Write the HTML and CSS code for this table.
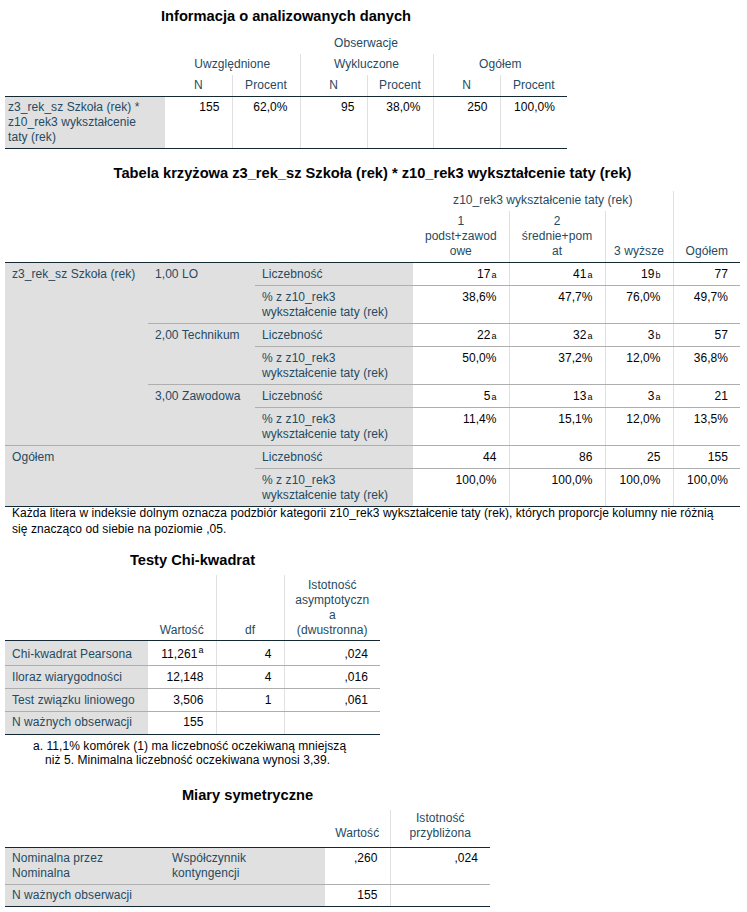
FILE: index.html
```html
<!DOCTYPE html>
<html lang="pl">
<head>
<meta charset="utf-8">
<title>SPSS output</title>
<link rel="stylesheet" href="styles.css">
</head>
<body>
<div class="page">

<table class="spss t1">
<caption>Informacja o analizowanych danych</caption>
<colgroup><col class="w160"><col class="w67"><col class="w68"><col class="w67"><col class="w66"><col class="w67"><col class="w67"></colgroup>
<thead>
<tr class="hr21"><th class="hb" rowspan="3"></th><th class="h" colspan="6">Obserwacje</th></tr>
<tr class="hr21"><th class="h" colspan="2">Uwzględnione</th><th class="h vl" colspan="2">Wykluczone</th><th class="h vl" colspan="2">Ogółem</th></tr>
<tr class="hr21"><th class="h hb">N</th><th class="h hb vl">Procent</th><th class="h hb vl">N</th><th class="h hb vl">Procent</th><th class="h hb vl">N</th><th class="h hb vl">Procent</th></tr>
</thead>
<tbody>
<tr><td class="lab lab1 tb">z3_rek_sz Szkoła (rek) *<br>z10_rek3 wykształcenie<br>taty (rek)</td><td class="num tb">155</td><td class="num tb vl">62,0%</td><td class="num tb vl">95</td><td class="num tb vl">38,0%</td><td class="num tb vl">250</td><td class="num tb vl">100,0%</td></tr>
</tbody>
</table>

<table class="spss t2">
<caption>Tabela krzyżowa z3_rek_sz Szkoła (rek) * z10_rek3 wykształcenie taty (rek)</caption>
<colgroup><col class="w143"><col class="w107"><col class="w158"><col class="w96"><col class="w96"><col class="w68"><col class="w67"></colgroup>
<thead>
<tr class="hr19"><th class="hb" colspan="3" rowspan="2"></th><th class="h" colspan="3">z10_rek3 wykształcenie taty (rek)</th><th class="h hb vl" rowspan="2">Ogółem</th></tr>
<tr class="hr52"><th class="h hb">1<br>podst+zawod<br>owe</th><th class="h hb vl">2<br>średnie+pom<br>at</th><th class="h hb vl">3 wyższe</th></tr>
</thead>
<tbody>
<tr><td class="lab rb" rowspan="6">z3_rek_sz Szkoła (rek)</td><td class="lab rb" rowspan="2">1,00 LO</td><td class="lab rb">Liczebność</td><td class="num rb">17<span class="sub">a</span></td><td class="num rb vl">41<span class="sub">a</span></td><td class="num rb vl">19<span class="sub">b</span></td><td class="num rb vl">77</td></tr>
<tr><td class="lab rb">% z z10_rek3<br>wykształcenie taty (rek)</td><td class="num rb">38,6%</td><td class="num rb vl">47,7%</td><td class="num rb vl">76,0%</td><td class="num rb vl">49,7%</td></tr>
<tr><td class="lab rb" rowspan="2">2,00 Technikum</td><td class="lab rb">Liczebność</td><td class="num rb">22<span class="sub">a</span></td><td class="num rb vl">32<span class="sub">a</span></td><td class="num rb vl">3<span class="sub">b</span></td><td class="num rb vl">57</td></tr>
<tr><td class="lab rb">% z z10_rek3<br>wykształcenie taty (rek)</td><td class="num rb">50,0%</td><td class="num rb vl">37,2%</td><td class="num rb vl">12,0%</td><td class="num rb vl">36,8%</td></tr>
<tr><td class="lab rb" rowspan="2">3,00 Zawodowa</td><td class="lab rb">Liczebność</td><td class="num rb">5<span class="sub">a</span></td><td class="num rb vl">13<span class="sub">a</span></td><td class="num rb vl">3<span class="sub">a</span></td><td class="num rb vl">21</td></tr>
<tr><td class="lab rb">% z z10_rek3<br>wykształcenie taty (rek)</td><td class="num rb">11,4%</td><td class="num rb vl">15,1%</td><td class="num rb vl">12,0%</td><td class="num rb vl">13,5%</td></tr>
<tr><td class="lab tb" colspan="2" rowspan="2">Ogółem</td><td class="lab rb">Liczebność</td><td class="num rb">44</td><td class="num rb vl">86</td><td class="num rb vl">25</td><td class="num rb vl">155</td></tr>
<tr><td class="lab tb">% z z10_rek3<br>wykształcenie taty (rek)</td><td class="num tb">100,0%</td><td class="num tb vl">100,0%</td><td class="num tb vl">100,0%</td><td class="num tb vl">100,0%</td></tr>
</tbody>
<tfoot>
<tr><td class="foot" colspan="7"><div class="foot-text">Każda litera w indeksie dolnym oznacza podzbiór kategorii z10_rek3 wykształcenie taty (rek), których proporcje kolumny nie różnią<br>się znacząco od siebie na poziomie ,05.</div></td></tr>
</tfoot>
</table>

<table class="spss t3">
<caption>Testy Chi-kwadrat</caption>
<colgroup><col class="w143"><col class="w68"><col class="w68"><col class="w96"></colgroup>
<thead>
<tr class="hr65"><th class="hb"></th><th class="h hb">Wartość</th><th class="h hb vl">df</th><th class="h hb vl">Istotność<br>asymptotyczn<br>a<br>(dwustronna)</th></tr>
</thead>
<tbody>
<tr class="tall"><td class="lab rb">Chi-kwadrat Pearsona</td><td class="num rb">11,261<sup class="sup">a</sup></td><td class="num rb vl">4</td><td class="num rb vl">,024</td></tr>
<tr><td class="lab rb">Iloraz wiarygodności</td><td class="num rb">12,148</td><td class="num rb vl">4</td><td class="num rb vl">,016</td></tr>
<tr><td class="lab rb">Test związku liniowego</td><td class="num rb">3,506</td><td class="num rb vl">1</td><td class="num rb vl">,061</td></tr>
<tr><td class="lab tb">N ważnych obserwacji</td><td class="num tb">155</td><td class="num tb vl"></td><td class="num tb vl"></td></tr>
</tbody>
<tfoot>
<tr><td class="foot2" colspan="4">a. 11,1% komórek (1) ma liczebność oczekiwaną mniejszą<br>niż 5. Minimalna liczebność oczekiwana wynosi 3,39.</td></tr>
</tfoot>
</table>

<table class="spss t4">
<caption>Miary symetryczne</caption>
<colgroup><col class="w160"><col class="w160"><col class="w65"><col class="w100"></colgroup>
<thead>
<tr class="hr38"><th class="hb" colspan="2"></th><th class="h hb">Wartość</th><th class="h hb vl">Istotność<br>przybliżona</th></tr>
</thead>
<tbody>
<tr><td class="lab rb">Nominalna przez<br>Nominalna</td><td class="lab rb">Współczynnik<br>kontyngencji</td><td class="num rb">,260</td><td class="num rb vl">,024</td></tr>
<tr><td class="lab tb" colspan="2">N ważnych obserwacji</td><td class="num tb">155</td><td class="num tb vl"></td></tr>
</tbody>
</table>

</div>
</body>
</html>
```

FILE: styles.css
```css
body {
  margin: 0;
  background: #ffffff;
  font-family: "Liberation Sans", Arial, sans-serif;
  font-size: 12px;
  color: #010205;
}

.page {
  padding: 8px 0 0 5px;
}

.spss {
  border-collapse: collapse;
  table-layout: fixed;
}

.spss caption {
  font-size: 14.67px;
  line-height: 17px;
  font-weight: bold;
  color: #010205;
  text-align: center;
  padding-bottom: 8px;
}

.t1 { width: 562px; }
.t2 { width: 735px; margin-top: 16px; }
.t3 { width: 375px; margin-top: 15px; }
.t4 { width: 485px; margin-top: 20px; }

.t2 caption { padding-bottom: 9px; }
.t3 caption { padding-bottom: 6px; }
.t4 caption { padding-bottom: 6px; }

.w160 { width: 160px; }
.w143 { width: 143px; }
.w107 { width: 107px; }
.w158 { width: 158px; }
.w100 { width: 100px; }
.w96 { width: 96px; }
.w68 { width: 68px; }
.w67 { width: 67px; }
.w66 { width: 66px; }
.w65 { width: 65px; }

.spss th,
.spss td {
  padding: 3.5px 12px 3.5px 7px;
  line-height: 15px;
  vertical-align: top;
  font-weight: normal;
  white-space: nowrap;
  letter-spacing: 0.06px;
}

.t3 td {
  padding-bottom: 3.25px;
}

.t4 td {
  padding-top: 3px;
  padding-bottom: 3px;
}

.spss th.h {
  color: #264a60;
  text-align: center;
  vertical-align: bottom;
  line-height: 15px;
  padding: 3px 4px 3px 4px;
}

.hr19 th.h { padding: 2px 4px 3px 4px; }
.hr52 th.h { padding: 3px 4px 3px 4px; }
.hr65 th.h { padding: 3px 4px 2px 4px; }
.hr38 th.h { padding: 1px 4px 6px 4px; }

.spss tr.tall td {
  padding-top: 6px;
}

.spss td.lab {
  background: #e0e0e0;
  color: #264a60;
  text-align: left;
}

.spss td.lab1 {
  padding: 3px 4px 3px 3px;
}

.t1 td.num {
  padding-top: 3px;
}

.spss td.num {
  text-align: right;
  color: #010205;
}

.vl { border-left: 1px solid #e0e0e0; }
.hb { border-bottom: 1px solid #152935; }
.rb { border-bottom: 1px solid #aeaeae; }
.tb { border-bottom: 1px solid #152935; }

.sub {
  font-size: 9px;
  vertical-align: 0;
  line-height: 0;
  margin-left: 1px;
}

.sup {
  font-size: 9px;
  vertical-align: 5px;
  line-height: 0;
  margin-left: 1px;
}

.spss td.foot {
  padding: 0 0 0 7px;
  line-height: 16px;
  color: #010205;
}

.foot-text {
  margin-top: -2px;
}

.spss td.foot2 {
  padding: 4px 0 0 40px;
  text-indent: -12px;
  line-height: 14px;
  color: #010205;
}
```
